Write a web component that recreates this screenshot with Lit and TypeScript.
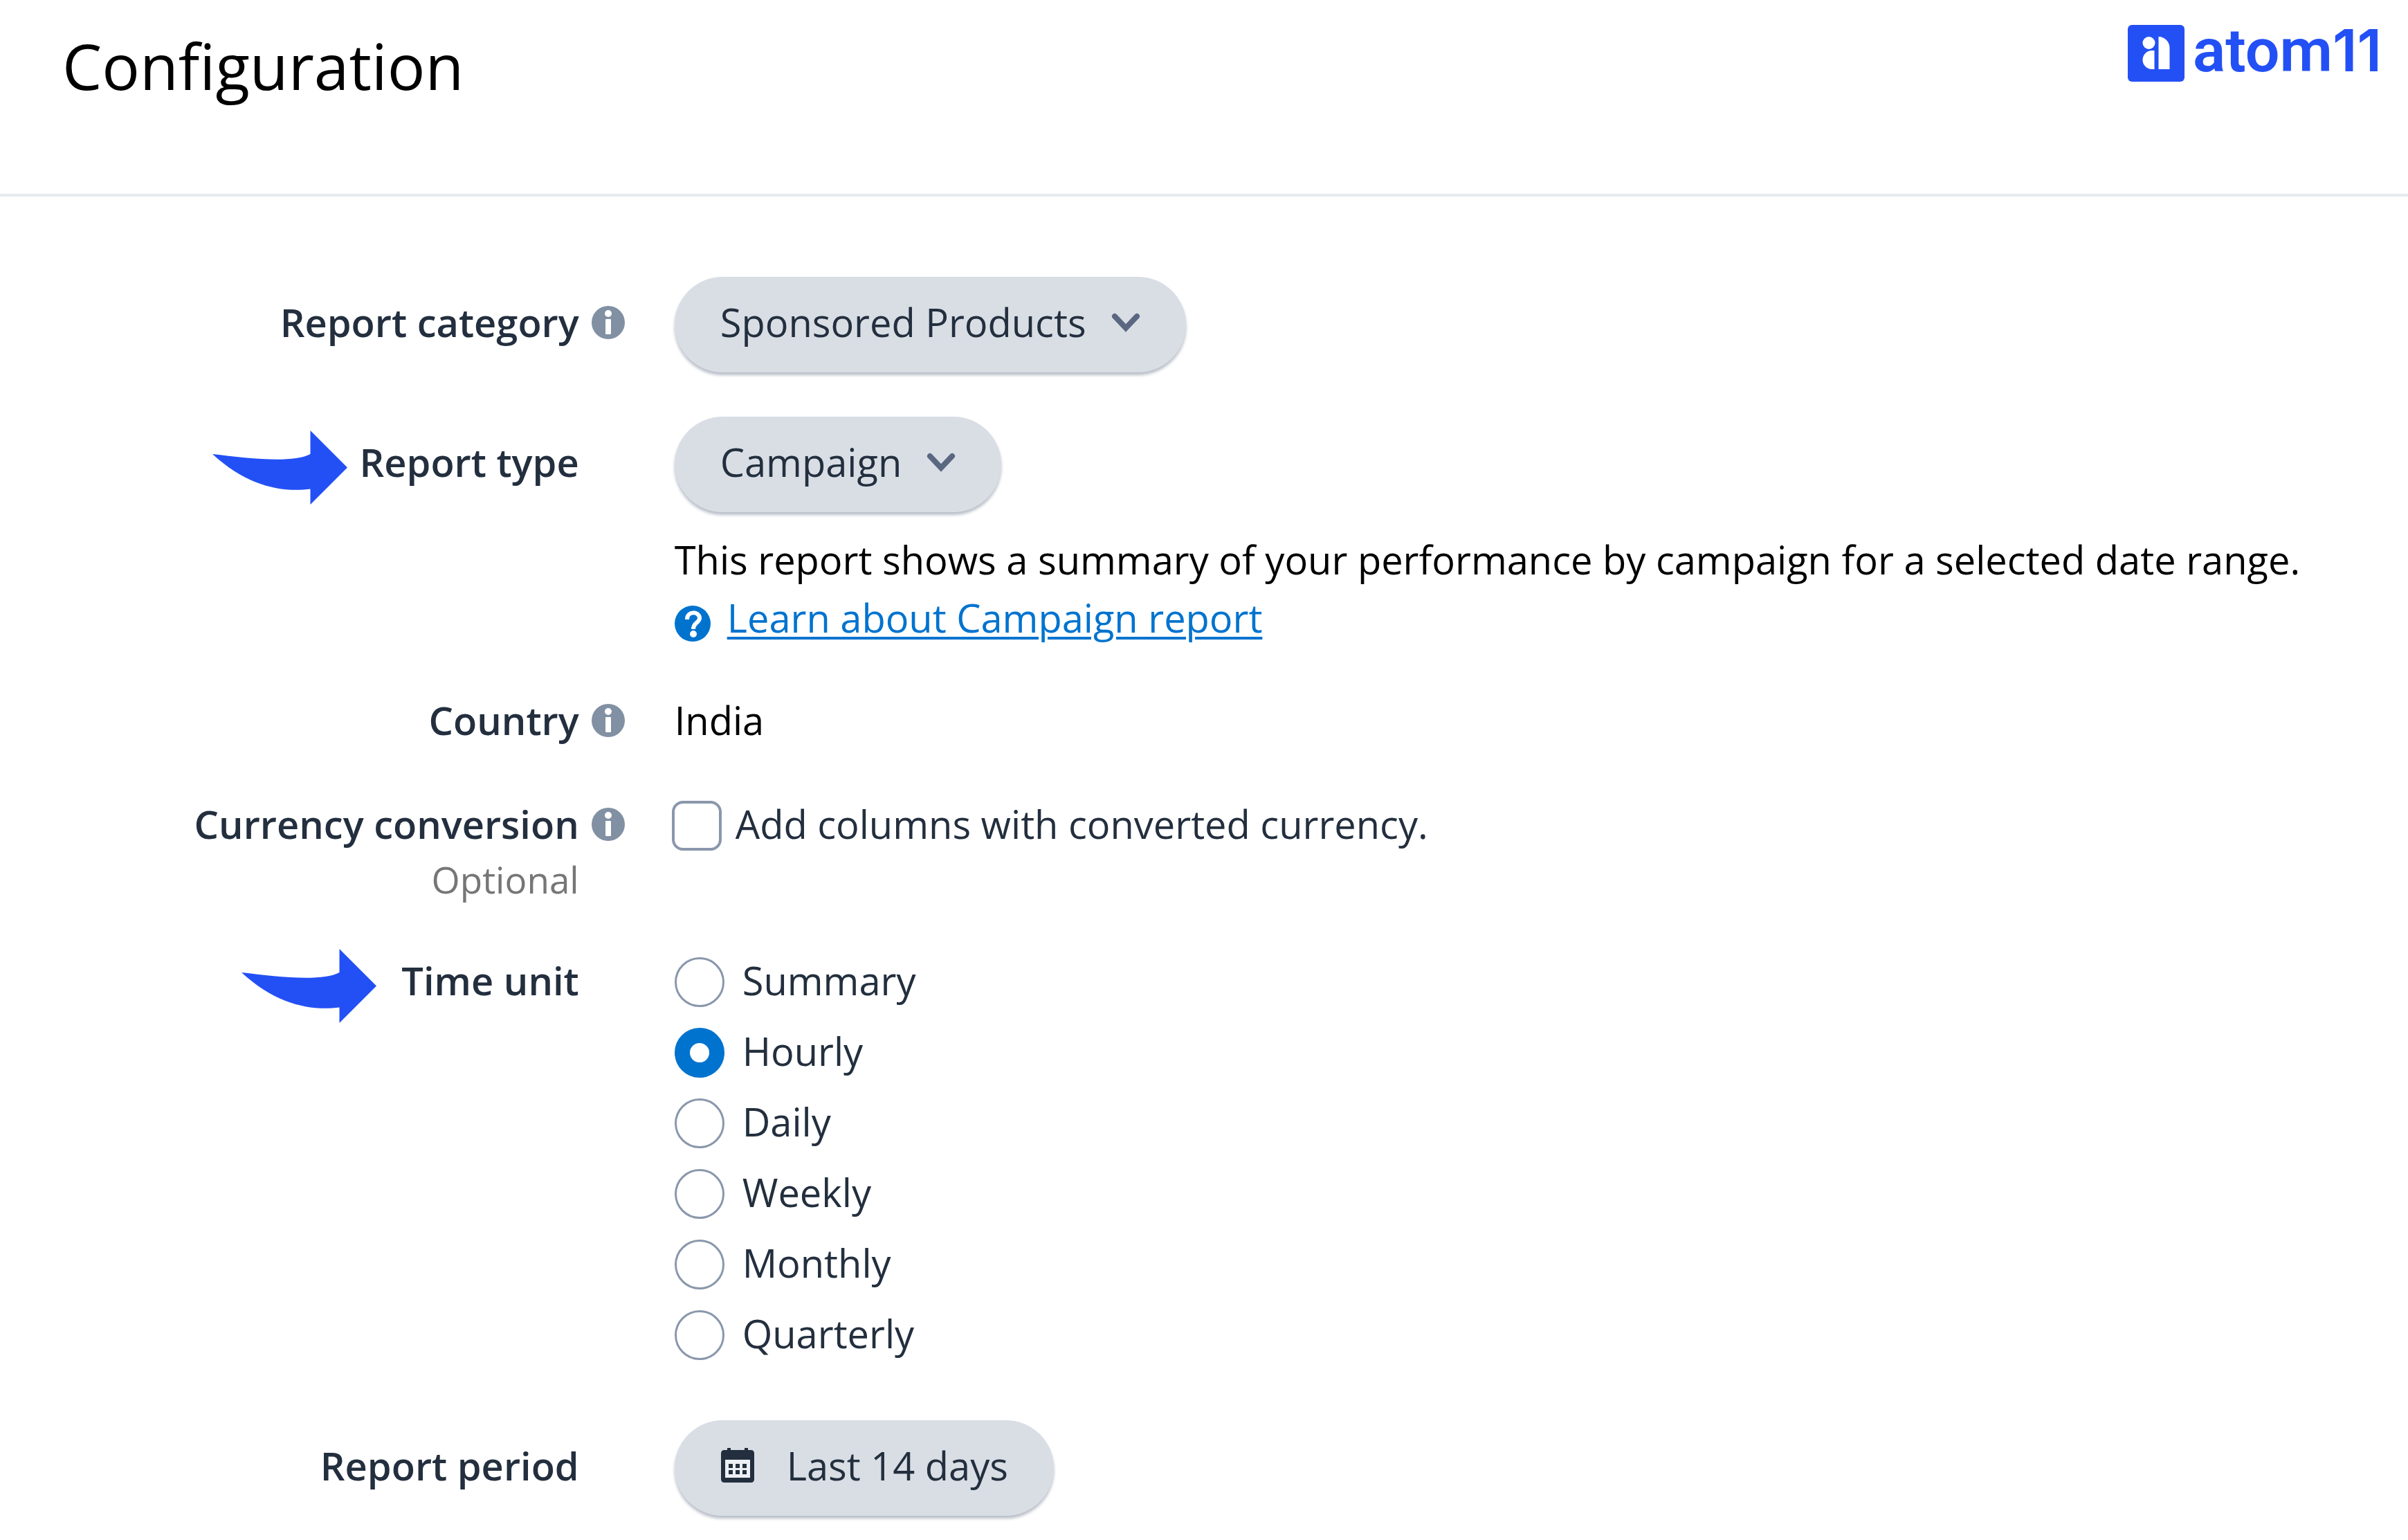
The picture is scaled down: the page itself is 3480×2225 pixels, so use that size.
import { LitElement, html, svg, css } from "lit";
import { customElement, property, state } from "lit/decorators.js";

const chevron = html`<svg class="chevron" viewBox="0 0 42 28" aria-hidden="true">
  <path d="M5 5 L21 22 L37 5" fill="none" stroke="#5a6780" stroke-width="8" stroke-linecap="round" />
</svg>`;

const pointer = html`<svg class="pointer" viewBox="0 0 195 107" aria-hidden="true">
  <path d="M0 34 C50 40 115 48 141.500 34 V0 L195 53.500 L141.500 107 V84.500 C100 90 50 80 0 34 Z" fill="#2350f5" />
</svg>`;

const calendarDots = [12, 22, 32].map(
  (x) => svg`<rect x=${x} y="24" width="6" height="6" /><rect x=${x} y="33" width="6" height="6" />`
);

@customElement("info-tip")
class InfoTip extends LitElement {
  static styles = css`
    :host { display: flex; }
    .tip { display: flex; padding: 0; border: 0; background: none; cursor: pointer; }
    .icon { width: 48px; height: 48px; }
  `;
  @property() topic = "";
  render() {
    return html`<button class="tip" type="button" aria-label=${"About " + this.topic}>
      <svg class="icon" viewBox="0 0 48 48" aria-hidden="true">
        <circle cx="24" cy="24" r="24" fill="#8290a4" />
        <circle cx="24" cy="11" r="5" fill="#fff" />
        <rect x="20" y="19" width="8" height="22" rx="1" fill="#fff" />
      </svg>
    </button>`;
  }
}

@customElement("brand-logo")
class BrandLogo extends LitElement {
  static styles = css`
    :host { display: flex; }
    .brand { display: flex; align-items: flex-start; gap: 12px; color: #2350f5; text-decoration: none; }
    .mark { width: 82px; height: 82px; }
    .name { font: 600 88px/74px Roboto, "Liberation Sans", sans-serif; }
    .digits { font-family: Inter, Roboto, sans-serif; font-size: 84px; }
  `;
  render() {
    return html`<a class="brand" href="#">
      <svg class="mark" viewBox="0 0 82 82" aria-hidden="true">
        <rect width="82" height="82" rx="6" fill="#2350f5" />
        <g fill="#fff">
          <circle cx="30.500" cy="26" r="9" />
          <path d="M38.500 37 V64 H35 A13.500 13.500 0 0 1 35 37 Z" />
          <path d="M44.500 17 C53 17 60.500 24 60.500 33 V64 H44.500 Z" />
        </g>
      </svg>
      <span class="name">atom<span class="digits">11</span></span>
    </a>`;
  }
}

@customElement("app-root")
class AppRoot extends LitElement {
  static styles = css`
    :host {
      display: block;
      min-height: 100vh;
      background: #fff;
      color: #232f3e;
      font: 400 56px/84px "Open Sans", "Noto Sans", sans-serif;
    }
    .header {
      display: flex;
      justify-content: space-between;
      align-items: flex-start;
      box-sizing: border-box;
      height: 284px;
      padding: 36px 38px 0 90px;
      border-bottom: 4px solid #e7eaee;
    }
    .title { margin: 0; color: #000; font-size: 91px; font-weight: 400; line-height: 118px; }
    .form { display: grid; gap: 64px; padding: 116px 0 36px 2px; }
    .row { display: grid; grid-template-columns: 24% 50px 1fr; column-gap: 18px; align-items: start; }
    .labels { display: grid; justify-items: end; }
    .label { display: flex; align-items: center; gap: 18px; font-weight: 600; }
    .spaced { gap: 36px; }
    .optional { color: #767676; font-size: 53px; line-height: 78px; }
    .tip { display: flex; align-items: center; height: 86px; }
    .control { padding-left: 52px; }
    .pill-line .labels, .pill-line .tip { padding-top: 23px; }
    .pointer { width: 195px; height: 107px; margin: -4px 0 -20px; }
    .pill {
      box-sizing: border-box;
      height: 138px;
      padding: 23px 66px 31px;
      border: 0;
      border-radius: 70px;
      background: #d9dee5;
      box-shadow: 0 4px 4px #b9bfc8;
      color: inherit;
      font: inherit;
      cursor: pointer;
    }
    .picker { display: inline-grid; align-items: center; vertical-align: top; }
    .picker > * { grid-area: 1 / 1; }
    .select { appearance: none; padding-right: 144px; field-sizing: content; }
    .chevron { justify-self: end; width: 42px; height: 28px; margin: 0 66px 6px 0; pointer-events: none; }
    .period { display: flex; align-items: center; gap: 46px; }
    .calendar { width: 50px; height: 52px; }
    .about { display: grid; margin-top: 26px; color: #000; }
    .text { margin: 0; }
    .learn { display: flex; align-items: center; gap: 24px; color: #0073cf; }
    .help { width: 52px; height: 52px; margin-top: 18px; }
    .link { color: inherit; text-decoration-thickness: 4px; text-underline-offset: 6px; }
    .value { color: #000; }
    .options { display: grid; gap: 18px; padding-bottom: 20px; }
    .option { display: flex; align-items: center; justify-self: start; gap: 26px; cursor: pointer; }
    .check { gap: 20px; margin-left: -4px; }
    .box, .radio {
      appearance: none;
      box-sizing: border-box;
      width: 72px;
      height: 72px;
      margin: 6px 0 0;
      border: 4px solid #8a97ab;
      background: #fff;
    }
    .box { border-radius: 16px; }
    .box:checked { background: #0073cf; }
    .radio { border-radius: 50%; border-width: 3px; }
    .radio:checked { border: 22px solid #0073cf; }
  `;

  @state() private unit = "Hourly";

  render() {
    const units = ["Summary", "Hourly", "Daily", "Weekly", "Monthly", "Quarterly"];
    return html`
      <header class="header">
        <h1 class="title">Configuration</h1>
        <brand-logo></brand-logo>
      </header>
      <form class="form">
        <div class="row pill-line">
          <div class="labels"><label class="label" for="category">Report category</label></div>
          <div class="tip"><info-tip topic="Report category"></info-tip></div>
          <div class="control">
            <span class="picker">
              <select class="pill select" id="category"><option>Sponsored Products</option></select>
              ${chevron}
            </span>
          </div>
        </div>
        <div class="row pill-line">
          <div class="labels"><label class="label" for="type">${pointer}Report type</label></div>
          <div class="tip"></div>
          <div class="control">
            <span class="picker">
              <select class="pill select" id="type"><option>Campaign</option></select>
              ${chevron}
            </span>
            <div class="about">
              <p class="text">This report shows a summary of your performance by campaign for a selected date range.</p>
              <div class="learn">
                <svg class="help" viewBox="0 0 52 52" aria-hidden="true">
                  <circle cx="26" cy="26" r="26" fill="#0073cf" />
                  <path d="M18 20 C18 7 36 8 36 18 C36 25 27 24 27 34" fill="none" stroke="#fff" stroke-width="6" />
                  <circle cx="27" cy="41" r="5" fill="#fff" />
                </svg>
                <a class="link" href="#">Learn about Campaign report</a>
              </div>
            </div>
          </div>
        </div>
        <div class="row">
          <div class="labels"><span class="label">Country</span></div>
          <div class="tip"><info-tip topic="Country"></info-tip></div>
          <div class="control value">India</div>
        </div>
        <div class="row">
          <div class="labels">
            <label class="label" for="convert">Currency conversion</label>
            <span class="optional">Optional</span>
          </div>
          <div class="tip"><info-tip topic="Currency conversion"></info-tip></div>
          <div class="control">
            <label class="option check">
              <input class="box" id="convert" type="checkbox" />Add columns with converted currency.
            </label>
          </div>
        </div>
        <div class="row">
          <div class="labels"><span class="label spaced" id="unit">${pointer}Time unit</span></div>
          <div class="tip"></div>
          <div class="control options" role="radiogroup" aria-labelledby="unit">
            ${units.map(
              (name) => html`<label class="option">
                <input class="radio" type="radio" name="unit" .checked=${this.unit === name} @change=${() => (this.unit = name)} />${name}
              </label>`
            )}
          </div>
        </div>
        <div class="row pill-line">
          <div class="labels"><label class="label" for="period">Report period</label></div>
          <div class="tip"></div>
          <div class="control">
            <button class="pill period" id="period" type="button">
              <svg class="calendar" viewBox="0 0 50 52" fill="#232f3e" aria-hidden="true">
                <path d="M10 1 H15 V4 H35 V1 H40 V4 H44 Q49 4 49 9 V46 Q49 51 44 51 H6 Q1 51 1 46 V9 Q1 4 6 4 H10 Z" />
                <rect x="7" y="18" width="36" height="26" fill="#eceff3" />
                ${calendarDots}
              </svg>
              Last 14 days
            </button>
          </div>
        </div>
      </form>
    `;
  }
}
